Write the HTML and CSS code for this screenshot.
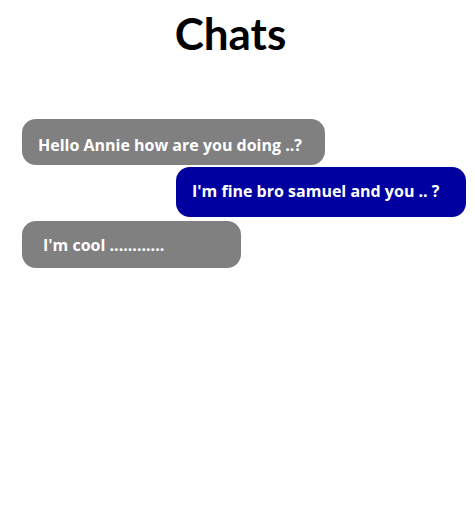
FILE: index.html
```html
<!DOCTYPE html>
<html>
<head>
<meta charset="utf-8">
<link rel="stylesheet" href="styles.css">
</head>
<body>
<h1 class="title">Chats</h1>
<div class="chat">
  <div class="msg left m1">Hello Annie how are you doing ..?</div>
  <div class="msg right m2">I'm fine bro samuel and you .. ?</div>
  <div class="msg left m3">I'm cool ............</div>
</div>
</body>
</html>
```
FILE: styles.css
```css
html, body {
  margin: 0;
  padding: 0;
  background: #fff;
}
body {
  font-family: Lato, "Open Sans", sans-serif;
  font-weight: 700;
}
.title {
  margin: 0;
  padding: 5px 14px 0 0;
  height: 112px;
  box-sizing: border-box;
  text-align: center;
  font-size: 44px;
  line-height: 56px;
  color: #000;
}
.chat {
  display: flex;
  flex-direction: column;
  padding: 7px 9px 0 22px;
}
.msg {
  color: #fff;
  font-family: "Open Sans", Lato, sans-serif;
  font-size: 16px;
  line-height: 18px;
  border-radius: 14px;
  box-sizing: border-box;
  white-space: nowrap;
}
.left {
  align-self: flex-start;
  background: #808080;
}
.right {
  align-self: flex-end;
  background: #0000a0;
}
.m1 {
  width: 303px;
  height: 46px;
  padding: 16.5px 0 0 16px;
}
.m2 {
  width: 290px;
  height: 50px;
  margin-top: 2px;
  padding: 15px 0 0 16px;
}
.m3 {
  width: 219px;
  height: 47px;
  margin-top: 4px;
  padding: 14.5px 0 0 21px;
}
```
